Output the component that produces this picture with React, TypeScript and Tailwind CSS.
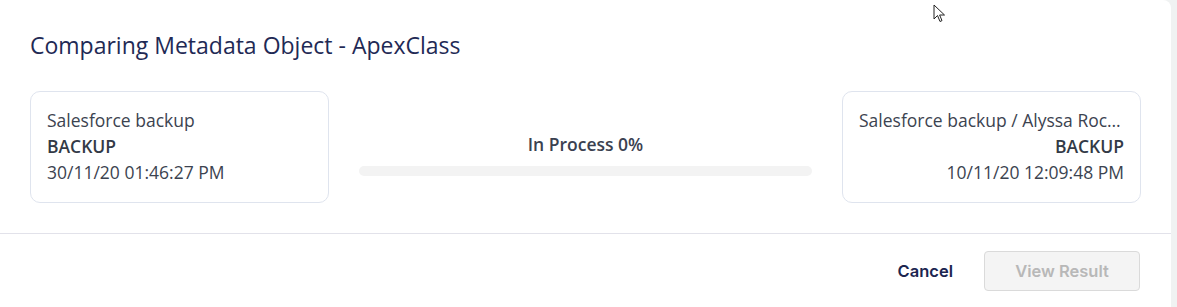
import React from 'react'

const open = { fontFamily: '"Open Sans", "Noto Sans", sans-serif' }
const btn = { fontFamily: 'Inter, Lato, sans-serif' }

function SourceCard({ name, type, date, right }: { name: string; type: string; date: string; right?: boolean }) {
  return (
    <div
      className={`w-[299px] h-[112px] shrink-0 rounded-[10px] border border-[#dfe4ee] bg-white px-4 pt-[15px] text-[17.5px] leading-[26px] text-[#3c4350] ${right ? 'text-right' : ''}`}
      style={open}
    >
      <div className="truncate">{name}</div>
      <div className="font-semibold text-[#333a46]">{type}</div>
      <div>{date}</div>
    </div>
  )
}

export default function App() {
  return (
    <div className="relative h-[307px] w-[1177px] overflow-hidden bg-[#f0f2f2]">
      <div className="flex h-full w-[1171px] flex-col rounded-tr-[8px] bg-white">
        {/* header */}
        <div className="px-[30px] pt-[30px]">
          <h1 className="text-[23px] leading-[30px] font-medium text-[#1f2a55]" style={open}>
            Comparing Metadata Object - ApexClass
          </h1>
        </div>

        {/* compare row */}
        <div className="mt-[31px] flex items-start px-[30px]">
          <SourceCard name="Salesforce backup" type="BACKUP" date="30/11/20 01:46:27 PM" />
          <div className="mx-[30px] flex flex-1 flex-col items-center pt-[41px]">
            <div className="text-[17.5px] leading-[24px] font-semibold text-[#3a4150]" style={open}>
              In Process 0%
            </div>
            <div className="mt-[10px] h-[10px] w-full rounded-full bg-[#f3f3f3]">
              <div className="h-full rounded-full bg-[#3b82f6]" style={{ width: '0%' }} />
            </div>
          </div>
          <SourceCard
            right
            name="Salesforce backup / Alyssa Rocha"
            type="BACKUP"
            date="10/11/20 12:09:48 PM"
          />
        </div>

        {/* footer */}
        <div className="mt-[30px] border-t border-[#e2e2ea]">
          <div className="flex items-center justify-end gap-[31px] px-[31px] pt-[17px]">
            <button className="text-[16.5px] font-semibold text-[#1c2550]" style={btn}>
              Cancel
            </button>
            <button
              disabled
              className="h-[40px] w-[156px] rounded-[4px] border border-[#dadada] bg-[#f4f4f4] text-[16.5px] font-semibold text-[#b8b8b8]"
              style={btn}
            >
              View Result
            </button>
          </div>
        </div>
      </div>

      {/* mouse pointer */}
      <svg className="absolute left-[933px] top-[4px]" width="13" height="19" viewBox="0 0 13 19">
        <path d="M1 1 L1 15 L4.5 11.5 L7 17.5 L9 16.6 L6.6 11 L11.5 11 Z" fill="#fff" stroke="#222" strokeWidth="1" strokeLinejoin="round" />
      </svg>
    </div>
  )
}
